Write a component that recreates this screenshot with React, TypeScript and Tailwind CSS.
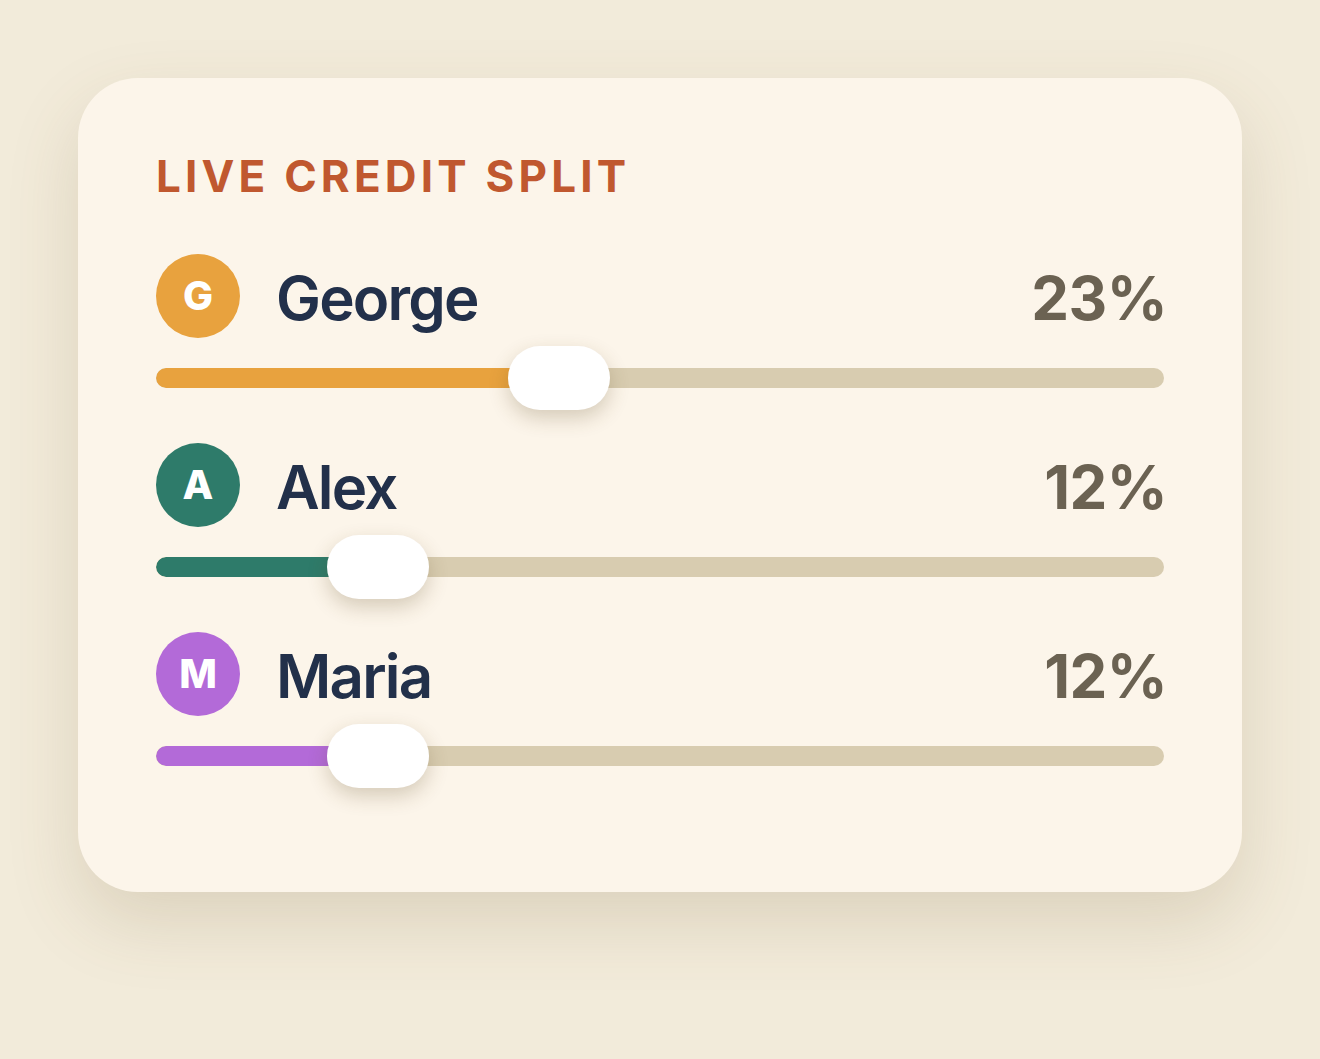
import type { CSSProperties } from "react";

const PEOPLE = [
    { name: "George", initial: "G", pct: "23%", pos: 0.389, color: "#e8a23e" },
    { name: "Alex", initial: "A", pct: "12%", pos: 0.189, color: "#2e7b6a" },
    { name: "Maria", initial: "M", pct: "12%", pos: 0.189, color: "#b36ad8" },
];

const THUMB = 102;

const App = () => {
    return (
        <div
            className="min-h-[1059px] w-full bg-[#f2ebda] pt-[78px] pl-[78px]"
            style={{ fontFamily: "Inter, 'Noto Sans', sans-serif" } as CSSProperties}
        >
            <div className="w-[1164px] h-[814px] rounded-[60px] bg-[#fcf5ea] px-[78px] pt-[74px] shadow-[0_30px_70px_rgba(110,90,50,0.17)]">
                <h1 className="text-[44px] leading-[48px] font-bold uppercase tracking-[0.095em] text-[#c0582f]">
                    Live Credit Split
                </h1>

                <div className="mt-[54px] flex flex-col gap-[33px]">
                    {PEOPLE.map((p) => (
                        <div key={p.name} className="flex flex-col gap-[8px]">
                            <div className="flex items-center h-[84px]">
                                <div
                                    className="h-[84px] w-[84px] rounded-full flex items-center justify-center text-[40px] font-extrabold text-white shrink-0"
                                    style={{ background: p.color }}
                                >
                                    {p.initial}
                                </div>
                                <span className="ml-[36px] mt-[4px] text-[60px] font-semibold tracking-[-0.03em] text-[#22304a]">
                                    {p.name}
                                </span>
                                <span className="ml-auto mr-[-3px] mt-[4px] text-[60px] font-bold tracking-[-0.01em] text-[#6b6252]">
                                    {p.pct}
                                </span>
                            </div>

                            {/* slider */}
                            <div className="relative h-[64px] flex items-center">
                                <div className="h-[20px] w-full rounded-full bg-[#d8ccb0] overflow-hidden">
                                    <div
                                        className="h-full rounded-full"
                                        style={{
                                            background: p.color,
                                            width: `calc(${THUMB / 2}px + (100% - ${THUMB}px) * ${p.pos})`,
                                        }}
                                    />
                                </div>
                                <div
                                    className="absolute top-0 h-[64px] w-[102px] rounded-full bg-white shadow-[0_8px_20px_rgba(90,70,30,0.24)]"
                                    style={{ left: `calc((100% - ${THUMB}px) * ${p.pos})` }}
                                />
                            </div>
                        </div>
                    ))}
                </div>
            </div>
        </div>
    );
};

export default App;
